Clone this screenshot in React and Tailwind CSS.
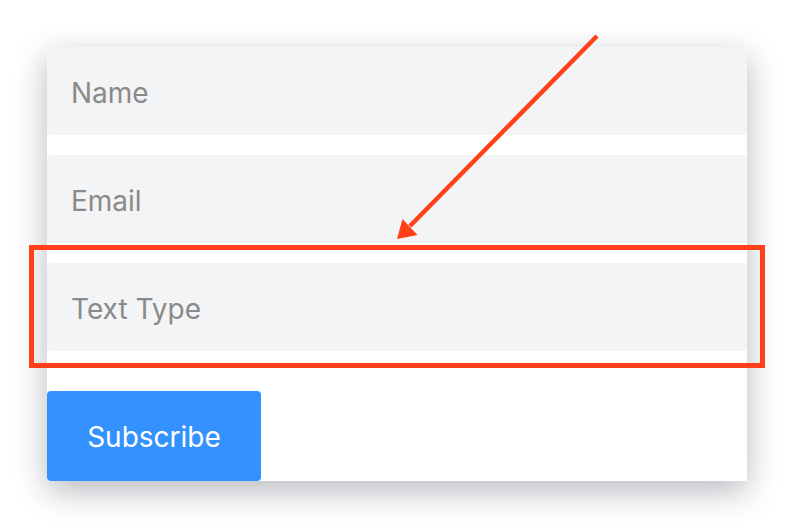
import React from "react";

function Field({ label }) {
  return (
    <div className="h-[88px] w-full rounded-[4px] bg-[#f3f4f6] flex items-center pl-6 pt-[3px]">
      <span className="text-[28px] leading-none text-[#8a8a8a]">{label}</span>
    </div>
  );
}

export default function App() {
  return (
    <div
      className="relative w-[794px] h-[528px] bg-white overflow-hidden"
      style={{ fontFamily: "Inter, 'Noto Sans', sans-serif" }}
    >
      <div className="pt-[47px] pl-[47px]">
        <div className="w-[700px] bg-white rounded-[2px] shadow-[0_10px_32px_rgba(17,24,39,0.3)] flex flex-col">
          <div className="flex flex-col gap-5">
            <Field label="Name" />
            <Field label="Email" />
            <Field label="Text Type" />
          </div>
          <button className="mt-10 h-[90px] w-[214px] rounded-[4px] bg-[#3392ff] text-white text-[28px] leading-none flex items-center justify-center pt-[1px]">
            Subscribe
          </button>
        </div>
      </div>

      <svg
        className="absolute inset-0 pointer-events-none"
        width="794"
        height="528"
        viewBox="0 0 794 528"
      >
        <rect
          x="31.5"
          y="247.5"
          width="731"
          height="118"
          fill="none"
          stroke="#ff4019"
          strokeWidth="5"
        />
        <line
          x1="597"
          y1="36"
          x2="410"
          y2="226"
          stroke="#ff4019"
          strokeWidth="4.5"
        />
        <polygon points="397,239 402.5,219 417.5,235" fill="#ff4019" />
      </svg>
    </div>
  );
}
